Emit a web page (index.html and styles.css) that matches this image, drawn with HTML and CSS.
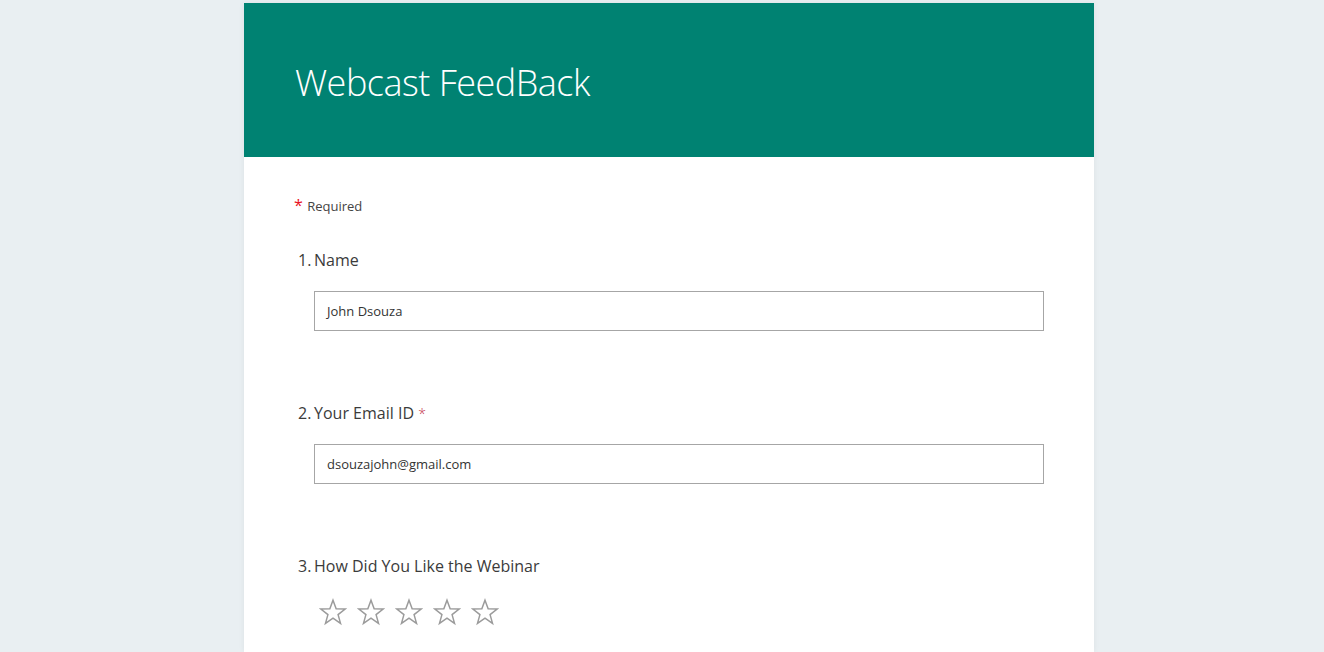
FILE: index.html
```html
<!DOCTYPE html>
<html>
<head>
<meta charset="utf-8">
<link rel="stylesheet" href="styles.css">
</head>
<body>
<div class="card">
  <div class="header">
    <h1 class="title">Webcast FeedBack</h1>
  </div>
  <div class="content">
    <div class="required"><span class="star-req">*</span> Required</div>

    <div class="question">
      <div class="qlabel"><span class="qnum">1.</span>Name</div>
      <div class="input">John Dsouza</div>
    </div>

    <div class="question">
      <div class="qlabel"><span class="qnum">2.</span>Your Email ID <span class="ast">*</span></div>
      <div class="input">dsouzajohn@gmail.com</div>
    </div>

    <div class="question">
      <div class="qlabel"><span class="qnum">3.</span>How Did You Like the Webinar</div>
      <div class="rating">
        <svg class="rstar" viewBox="0 0 32 32"><path d="M16 2.5 L19.6 12.3 L29.9 12.6 L21.8 19 L24.6 29 L16 23.1 L7.4 29 L10.2 19 L2.1 12.6 L12.4 12.3 Z"/></svg>
        <svg class="rstar" viewBox="0 0 32 32"><path d="M16 2.5 L19.6 12.3 L29.9 12.6 L21.8 19 L24.6 29 L16 23.1 L7.4 29 L10.2 19 L2.1 12.6 L12.4 12.3 Z"/></svg>
        <svg class="rstar" viewBox="0 0 32 32"><path d="M16 2.5 L19.6 12.3 L29.9 12.6 L21.8 19 L24.6 29 L16 23.1 L7.4 29 L10.2 19 L2.1 12.6 L12.4 12.3 Z"/></svg>
        <svg class="rstar" viewBox="0 0 32 32"><path d="M16 2.5 L19.6 12.3 L29.9 12.6 L21.8 19 L24.6 29 L16 23.1 L7.4 29 L10.2 19 L2.1 12.6 L12.4 12.3 Z"/></svg>
        <svg class="rstar" viewBox="0 0 32 32"><path d="M16 2.5 L19.6 12.3 L29.9 12.6 L21.8 19 L24.6 29 L16 23.1 L7.4 29 L10.2 19 L2.1 12.6 L12.4 12.3 Z"/></svg>
      </div>
    </div>
  </div>
</div>
</body>
</html>
```

FILE: styles.css
```css
html, body {
  margin: 0;
  padding: 0;
}
body {
  background: #e9eff2;
  font-family: "Open Sans", "Noto Sans", sans-serif;
  color: #333333;
  height: 652px;
  overflow: hidden;
}
.card {
  width: 850px;
  margin: 3px 0 0 244px;
  background: #ffffff;
  box-shadow: 0 0 6px rgba(0, 0, 0, 0.06);
  height: 649px;
  overflow: hidden;
}
.header {
  background: #008272;
  height: 154px;
  display: flex;
  align-items: center;
  padding-left: 51px;
}
.title {
  margin: 4px 0 0 0;
  font-weight: 300;
  font-size: 36px;
  color: #ffffff;
  letter-spacing: -0.5px;
}
.content {
  padding: 37px 50px 0 50px;
  display: flex;
  flex-direction: column;
}
.required {
  font-size: 13px;
  color: #444;
  height: 22px;
  line-height: 22px;
  margin-bottom: 33px;
}
.star-req {
  color: #e81123;
  font-size: 16px;
  margin-right: 1px;
}
.question {
  margin-bottom: 71px;
}
.qlabel {
  font-size: 16px;
  line-height: 22px;
  height: 22px;
  padding-left: 4px;
  color: #3b3b3b;
}
.qnum {
  display: inline-block;
  width: 16px;
}
.ast {
  color: #c4314b;
  font-size: 14px;
  font-weight: 300;
}
.input {
  margin: 20px 0 0 20px;
  height: 38px;
  border: 1px solid #a6a6a6;
  font-size: 13px;
  line-height: 38px;
  padding-left: 12px;
  color: #333;
}
.rating {
  margin: 21px 0 0 25px;
  display: flex;
  gap: 10px;
}
.rstar {
  width: 28px;
  height: 28px;
  fill: none;
  stroke: #9b9b9b;
  stroke-width: 1.7;
  stroke-linejoin: miter;
}
```
